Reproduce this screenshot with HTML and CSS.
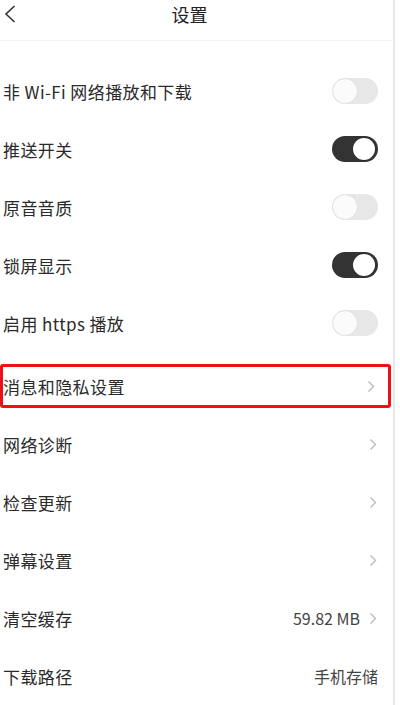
FILE: index.html
```html
<!DOCTYPE html>
<html lang="zh-CN">

<head>
    <meta charset="UTF-8">
    <meta name="viewport" content="width=device-width, initial-scale=1.0">
    <title>设置</title>
    <link rel="stylesheet" href="styles.css">
</head>

<body>
    <div class="page">
        <div class="header">
            <a href="#" class="back">
                <svg width="12" height="18" viewBox="0 0 12 18"><path d="M10.5 1 L2 9 L10.5 17" fill="none" stroke="#333" stroke-width="1.6"/></svg>
            </a>
            <div class="title">设置</div>
            <div></div>
        </div>

        <div class="list">
            <div class="row">
                <span class="label">非 Wi-Fi 网络播放和下载</span>
                <span class="switch"></span>
            </div>
            <div class="row">
                <span class="label">推送开关</span>
                <span class="switch on"></span>
            </div>
            <div class="row">
                <span class="label">原音音质</span>
                <span class="switch"></span>
            </div>
            <div class="row">
                <span class="label">锁屏显示</span>
                <span class="switch on"></span>
            </div>
            <div class="row">
                <span class="label">启用 https 播放</span>
                <span class="switch"></span>
            </div>
        </div>

        <div class="list group">
            <div class="row marked">
                <span class="label">消息和隐私设置</span>
                <span class="arrow"><svg width="8" height="13" viewBox="0 0 8 13"><path d="M1.5 1.5 L6.5 6.5 L1.5 11.5" fill="none" stroke="#bbb" stroke-width="1.4"/></svg></span>
            </div>
            <div class="row">
                <span class="label">网络诊断</span>
                <span class="arrow"><svg width="8" height="13" viewBox="0 0 8 13"><path d="M1.5 1.5 L6.5 6.5 L1.5 11.5" fill="none" stroke="#bbb" stroke-width="1.4"/></svg></span>
            </div>
            <div class="row">
                <span class="label">检查更新</span>
                <span class="arrow"><svg width="8" height="13" viewBox="0 0 8 13"><path d="M1.5 1.5 L6.5 6.5 L1.5 11.5" fill="none" stroke="#bbb" stroke-width="1.4"/></svg></span>
            </div>
            <div class="row">
                <span class="label">弹幕设置</span>
                <span class="arrow"><svg width="8" height="13" viewBox="0 0 8 13"><path d="M1.5 1.5 L6.5 6.5 L1.5 11.5" fill="none" stroke="#bbb" stroke-width="1.4"/></svg></span>
            </div>
            <div class="row">
                <span class="label">清空缓存</span>
                <span class="extra">
                    <span class="value">59.82 MB</span>
                    <span class="arrow"><svg width="8" height="13" viewBox="0 0 8 13"><path d="M1.5 1.5 L6.5 6.5 L1.5 11.5" fill="none" stroke="#bbb" stroke-width="1.4"/></svg></span>
                </span>
            </div>
            <div class="row">
                <span class="label">下载路径</span>
                <span class="value">手机存储</span>
            </div>
        </div>
    </div>
</body>

</html>
```

FILE: styles.css
```css
body {
    margin: 0;
    background-color: white;
    font-family: "Noto Sans CJK SC", "Noto Sans", sans-serif;
    color: #2a2a2a;
}

.page {
    width: 393px;
    height: 705px;
    border-right: 2px solid #e8e8e8;
    overflow: hidden;
}

.header {
    display: grid;
    grid-template-columns: 20px 1fr 34px;
    height: 40px;
    border-bottom: 1px solid #f3f3f3;
}

.back {
    display: block;
    padding: 4px 0 0 4px;
}

.title {
    text-align: center;
    font-size: 18px;
    line-height: 24px;
    padding-top: 2px;
    color: #222;
}

.list {
    padding-top: 21px;
}

.list.group {
    padding-top: 5px;
}

.row {
    display: flex;
    align-items: center;
    justify-content: space-between;
    box-sizing: border-box;
    height: 58px;
    padding: 0 15px 0 3px;
}

.row.marked {
    height: 44px;
    width: 391px;
    margin: 7px 0 7px;
    padding: 0 12px 0 0;
    border: 3px solid #ec1018;
    border-radius: 3px;
}

.label {
    font-size: 17px;
    letter-spacing: 0.4px;
}

.switch {
    position: relative;
    width: 46px;
    height: 26px;
    border-radius: 13px;
    background-color: #e7e7e7;
}

.switch::after {
    content: "";
    position: absolute;
    top: 1px;
    left: 1px;
    width: 24px;
    height: 24px;
    border-radius: 50%;
    background-color: #fbfbfb;
    box-shadow: 0 0 1px rgba(0, 0, 0, 0.15);
}

.switch.on {
    background-color: #333;
}

.switch.on::after {
    left: 21px;
    top: 2px;
    width: 22px;
    height: 22px;
    background-color: white;
}

.arrow {
    display: flex;
    align-items: center;
    margin-right: 1px;
}

.extra {
    display: flex;
    align-items: center;
    gap: 9px;
}

.value {
    font-size: 16px;
    color: #444;
}
```
